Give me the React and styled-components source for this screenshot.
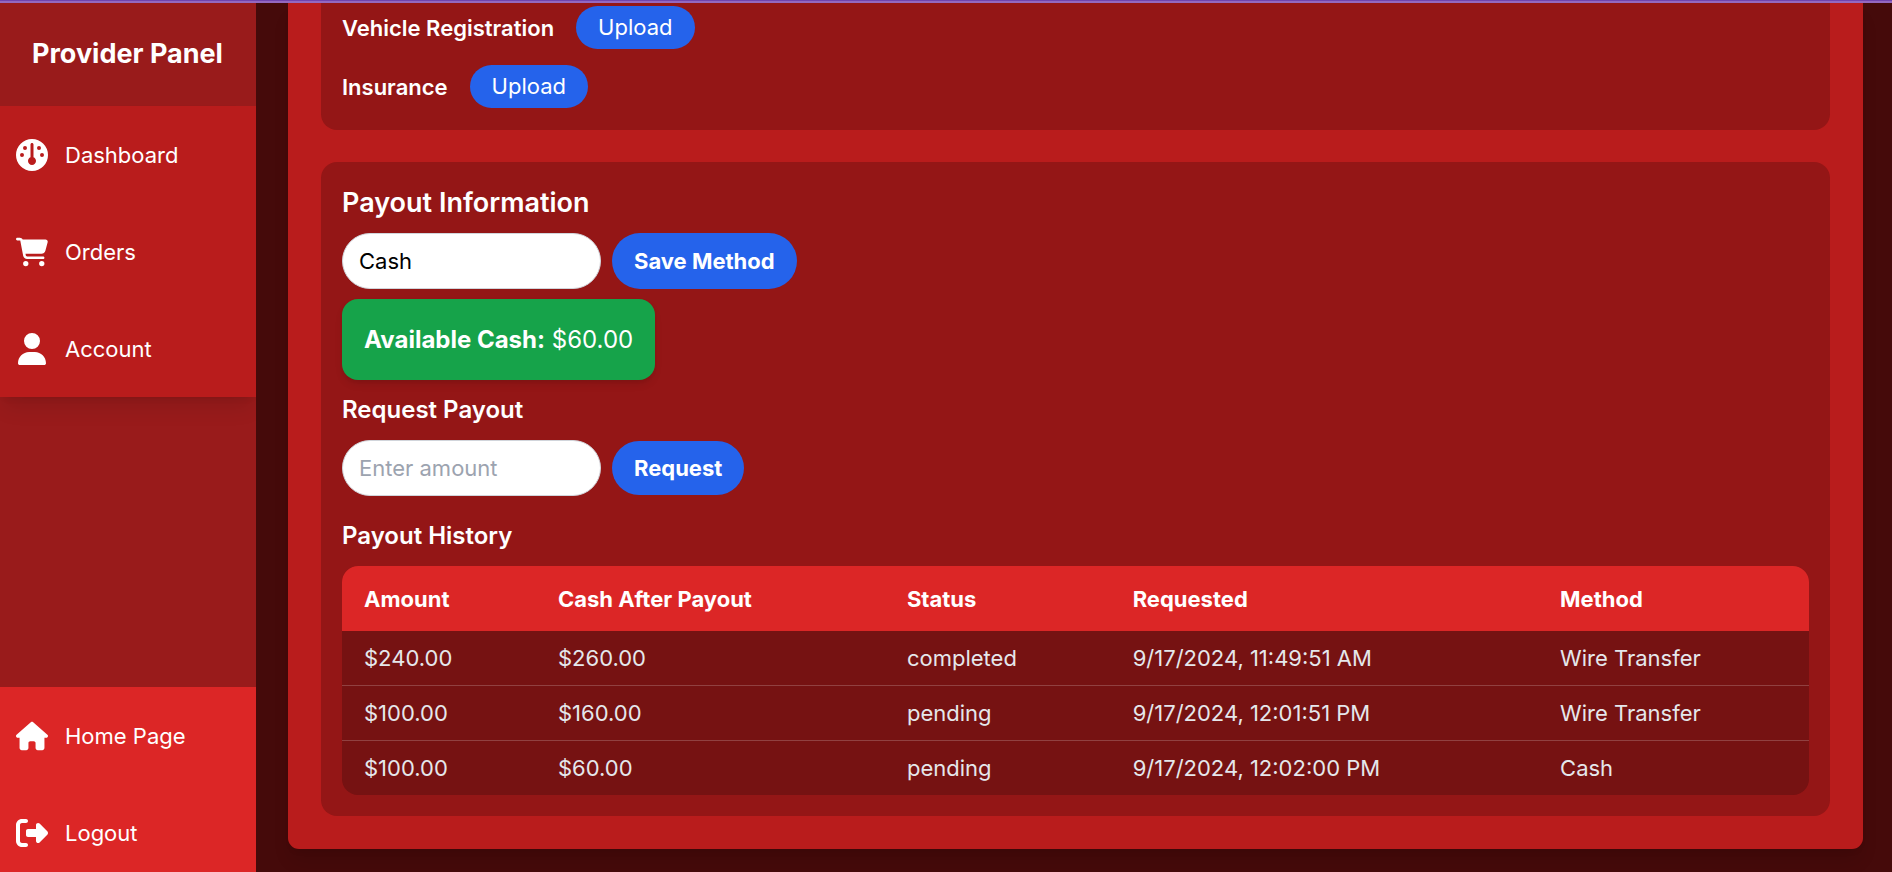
import React, { useState } from "react";
import styled, { createGlobalStyle, css } from "styled-components";
import {
  FaGauge,
  FaCartShopping,
  FaUser,
  FaHouse,
  FaRightFromBracket,
} from "react-icons/fa6";

const GlobalStyle = createGlobalStyle`
  *, *::before, *::after { box-sizing: border-box; }
  body {
    margin: 0;
    background: #450a0a;
    color: #fff;
    font-family: Inter, "Liberation Sans", sans-serif;
    font-size: 22px;
    line-height: 32px;
  }
  h1, h2, h3, p, ul { margin: 0; padding: 0; }
  button, input, select { font: inherit; margin: 0; }
`;

const Shell = styled.div`
  height: 100vh;
  display: flex;
  flex-direction: column;
  overflow: hidden;
`;

const Accent = styled.div`
  flex: none;
  height: 3px;
  background: #9468c0;
  border-top: 1px solid #7044ae;
`;

const Columns = styled.div`
  flex: 1;
  min-height: 0;
  display: flex;
`;

const Sidebar = styled.aside`
  flex: none;
  width: 256px;
  display: flex;
  flex-direction: column;
  overflow: hidden;
  background: #991b1b;
`;

const Brand = styled.h1`
  padding: 31px 32px 33px;
  font-size: 27px;
  line-height: 39px;
  font-weight: 700;
  white-space: nowrap;
`;

const Nav = styled.ul`
  list-style: none;
  background: ${(p) => (p.$bottom ? "#dc2626" : "#b91c1c")};
  ${(p) =>
    p.$bottom
      ? css`
          margin-top: auto;
          margin-bottom: -9px;
        `
      : css`
          box-shadow: 0 14px 20px -4px rgba(0, 0, 0, 0.1),
            0 5px 8px -5px rgba(0, 0, 0, 0.1);
        `}
`;

const NavLink = styled.a`
  display: flex;
  align-items: center;
  gap: 17px;
  height: 97px;
  padding: 0 16px;
  color: #fff;
  text-decoration: none;
  svg {
    flex: none;
    width: 32px;
    height: 32px;
  }
`;

const Main = styled.main`
  flex: 1;
  min-width: 0;
  padding: 0 29px 23px 32px;
  overflow: hidden;
`;

const Card = styled.div`
  display: flex;
  flex-direction: column;
  gap: 32px;
  padding: 0 33px 33px;
  background: #b91c1c;
  border-radius: 0 0 11px 11px;
  box-shadow: 0 14px 20px -4px rgba(0, 0, 0, 0.1),
    0 5px 8px -5px rgba(0, 0, 0, 0.1);
`;

const Panel = styled.section`
  padding: ${(p) => (p.$continued ? "3px 21px 22px" : "22px 21px 21px")};
  background: #941616;
  border-radius: ${(p) => (p.$continued ? "0 0 16px 16px" : "16px")};
`;

const Documents = styled.div`
  display: flex;
  flex-direction: column;
  gap: 16px;
`;

const DocumentRow = styled.div`
  display: flex;
  align-items: center;
  gap: 22px;
`;

const DocumentName = styled.span`
  font-weight: 600;
`;

const Button = styled.button`
  padding: ${(p) => (p.$small ? "5px 22px 6px" : "11px 22px")};
  border: 0;
  border-radius: 28px;
  background: #2563eb;
  color: #fff;
  font-weight: ${(p) => (p.$small ? 400 : 700)};
  cursor: pointer;
`;

const Title = styled.h2`
  margin-bottom: 11px;
  font-size: 27px;
  line-height: 38px;
  font-weight: 600;
`;

const Subtitle = styled.h3`
  margin-bottom: 11px;
  font-size: 24px;
  line-height: 38px;
  font-weight: 600;
`;

const Form = styled.form`
  display: flex;
  align-items: ${(p) => p.$align};
  gap: 11px;
  margin-bottom: ${(p) => p.$space};
`;

const field = css`
  width: 259px;
  height: 56px;
  padding: 0 16px;
  border: 1px solid #d1d5db;
  border-radius: 28px;
  background: #fff;
  color: #000;
  appearance: none;
`;

const MethodSelect = styled.select`
  ${field}
`;

const AmountInput = styled.input`
  ${field}
  &::placeholder {
    color: #9ca3af;
    opacity: 1;
  }
`;

const Balance = styled.p`
  width: fit-content;
  margin-bottom: 11px;
  padding: 22px 22px 21px;
  border-radius: 16px;
  background: #16a34a;
  font-size: 24px;
  line-height: 38px;
  box-shadow: 0 5px 8px -1px rgba(0, 0, 0, 0.1),
    0 2px 5px -2px rgba(0, 0, 0, 0.1);
`;

const History = styled.table`
  width: 100%;
  border-spacing: 0;
  border-radius: 16px;
  overflow: hidden;
  background: #761212;
  text-align: left;
`;

const HeadCell = styled.th`
  height: 65px;
  padding: 0 22px;
  background: #dc2626;
  font-weight: 700;
`;

const Cell = styled.td`
  padding: 11px 22px;
  color: #e5e7eb;
  tr:not(:last-child) > & {
    border-bottom: 1px solid rgba(255, 255, 255, 0.2);
  }
`;

const mainLinks = [
  ["Dashboard", FaGauge],
  ["Orders", FaCartShopping],
  ["Account", FaUser],
];

const bottomLinks = [
  ["Home Page", FaHouse],
  ["Logout", FaRightFromBracket],
];

const columns = ["Amount", "Cash After Payout", "Status", "Requested", "Method"];

const payouts = [
  ["$240.00", "$260.00", "completed", "9/17/2024, 11:49:51 AM", "Wire Transfer"],
  ["$100.00", "$160.00", "pending", "9/17/2024, 12:01:51 PM", "Wire Transfer"],
  ["$100.00", "$60.00", "pending", "9/17/2024, 12:02:00 PM", "Cash"],
];

const renderLinks = (links) =>
  links.map(([label, Icon]) => (
    <li key={label}>
      <NavLink href="#">
        <Icon aria-hidden="true" />
        {label}
      </NavLink>
    </li>
  ));

export default function App() {
  const [method, setMethod] = useState("Cash");
  const [amount, setAmount] = useState("");
  const stop = (e) => e.preventDefault();

  return (
    <Shell>
      <GlobalStyle />
      <Accent />
      <Columns>
        <Sidebar>
          <Brand>Provider Panel</Brand>
          <Nav>{renderLinks(mainLinks)}</Nav>
          <Nav $bottom>{renderLinks(bottomLinks)}</Nav>
        </Sidebar>
        <Main>
          <Card>
            <Panel $continued>
              <Documents>
                {["Vehicle Registration", "Insurance"].map((name) => (
                  <DocumentRow key={name}>
                    <DocumentName>{name}</DocumentName>
                    <Button $small type="button">
                      Upload
                    </Button>
                  </DocumentRow>
                ))}
              </Documents>
            </Panel>
            <Panel>
              <Title>Payout Information</Title>
              <Form $align="stretch" $space="10px" onSubmit={stop}>
                <MethodSelect
                  aria-label="Payout method"
                  value={method}
                  onChange={(e) => setMethod(e.target.value)}
                >
                  <option>Cash</option>
                  <option>Wire Transfer</option>
                </MethodSelect>
                <Button>Save Method</Button>
              </Form>
              <Balance>
                <strong>Available Cash:</strong> $60.00
              </Balance>
              <Subtitle>Request Payout</Subtitle>
              <Form $align="center" $space="21px" onSubmit={stop}>
                <AmountInput
                  aria-label="Payout amount"
                  placeholder="Enter amount"
                  value={amount}
                  onChange={(e) => setAmount(e.target.value)}
                />
                <Button>Request</Button>
              </Form>
              <Subtitle>Payout History</Subtitle>
              <History>
                <thead>
                  <tr>
                    {columns.map((c) => (
                      <HeadCell key={c} scope="col">
                        {c}
                      </HeadCell>
                    ))}
                  </tr>
                </thead>
                <tbody>
                  {payouts.map((row) => (
                    <tr key={row[3]}>
                      {row.map((value, i) => (
                        <Cell key={columns[i]}>{value}</Cell>
                      ))}
                    </tr>
                  ))}
                </tbody>
              </History>
            </Panel>
          </Card>
        </Main>
      </Columns>
    </Shell>
  );
}
